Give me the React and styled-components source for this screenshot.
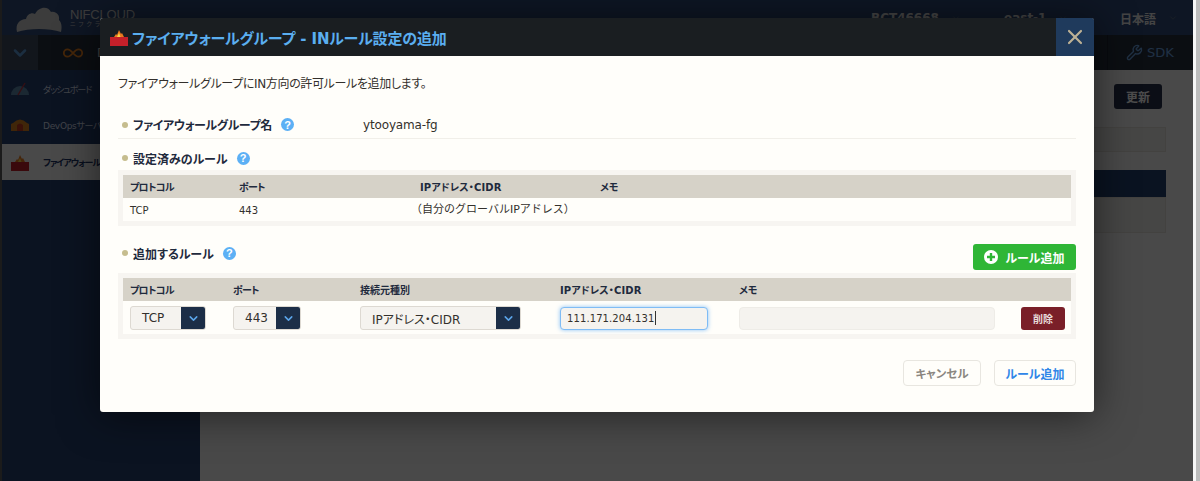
import React from 'react';
import styled, { createGlobalStyle } from 'styled-components';
import { ChevronDown, Infinity as InfinityIcon, Wrench, X } from 'lucide-react';

const GlobalStyle = createGlobalStyle`
  html, body {
    margin: 0;
    padding: 0;
    overflow: hidden;
    background: #4a4a4a;
  }
  * { box-sizing: border-box; }
`;

const FONT = `"DejaVu Sans", "Noto Sans CJK JP", sans-serif`;

const Page = styled.div`
  position: relative;
  width: 1200px;
  height: 481px;
  overflow: hidden;
  display: flex;
  font-family: ${FONT};
  font-feature-settings: "palt";
`;

const Screen = styled.div`
  width: 1193px;
  height: 100%;
  flex: none;
  display: flex;
  flex-direction: column;
  border-left: 2px solid #5a5a5a;
  background: #f6f6f4;
`;

const Gutter = styled.div`
  flex: 1;
  border-left: 3px solid #f6f6f6;
  background: #bcbcbc;
`;

const TopBar = styled.header`
  height: 35px;
  flex: none;
  display: flex;
  align-items: center;
  padding-left: 13px;
  background: #2f4a78;
  color: #fff;
`;

const Logo = styled.div`
  display: flex;
  align-items: center;
  gap: 7px;
`;

const LogoText = styled.div`
  display: flex;
  flex-direction: column;
  font-family: "Liberation Sans", "Noto Sans CJK JP", sans-serif;
  font-size: 13px;
  line-height: 13px;
  letter-spacing: -0.2px;
  color: #c8c8c8;

  small {
    font-size: 6px;
    line-height: 7px;
    letter-spacing: 3px;
  }
`;

const TopMenu = styled.div`
  margin-left: auto;
  display: flex;
  font-size: 12px;
  font-weight: 700;
  color: #e4e4e4;
`;

const TopMenuItem = styled.span`
  width: ${p => p.$w}px;
  display: flex;
  align-items: center;
  gap: 12px;
  padding-top: 1px;

  svg {
    color: #5a6a80;
  }
`;

const NavBar = styled.nav`
  height: 35px;
  flex: none;
  display: flex;
  align-items: center;
  background: #26303f;
`;

const NavToggle = styled.div`
  width: 36px;
  height: 100%;
  display: flex;
  align-items: center;
  justify-content: center;
  background: #3c4a60;
  color: #5c9ad8;
`;

const NavItem = styled.div`
  height: 100%;
  padding-left: 24px;
  display: flex;
  align-items: center;
  gap: 13px;
  font-size: 12px;
  color: #ddd;
`;

const SdkItem = styled(NavItem)`
  margin-left: auto;
  width: 86px;
  padding-left: 18px;
  gap: 4px;
  font-size: 13px;
  color: #6aa0e0;
  border-left: 1px solid #1b2230;
`;

const Main = styled.div`
  flex: 1;
  display: flex;
  min-height: 0;
`;

const Sidebar = styled.aside`
  width: 198px;
  flex: none;
  padding-top: 1px;
  background: #26406f;
`;

const SideItem = styled.div`
  height: 36px;
  margin-top: ${p => (p.$active ? 1 : 0)}px;
  display: flex;
  align-items: center;
  gap: 13px;
  padding-left: 8px;
  font-size: 9px;
  font-weight: ${p => (p.$active ? 700 : 400)};
  letter-spacing: ${p => p.$ls}px;
  white-space: nowrap;
  color: ${p => (p.$active ? '#1d3566' : '#d4dcec')};
  background: ${p => (p.$active ? '#f4f4f4' : 'transparent')};
`;

const Content = styled.main`
  flex: 1;
  display: flex;
  flex-direction: column;
  align-items: flex-end;
  padding: 14px 27px 0 0;
`;

const RefreshButton = styled.div`
  width: 48px;
  height: 25px;
  display: flex;
  align-items: center;
  justify-content: center;
  border-radius: 3px;
  background: #26304a;
  color: #fff;
  font-size: 12px;
  font-weight: 700;
  margin-right: 4px;
`;

const ContentRow = styled.div`
  width: 400px;
  height: ${p => p.$h}px;
  margin-top: ${p => p.$mt}px;
  background: ${p => p.$bg};
  border: 1px solid ${p => p.$bd};
`;

const Overlay = styled.div`
  position: absolute;
  top: 0;
  bottom: 0;
  left: 0;
  width: 1193px;
  background: rgba(0, 0, 0, 0.7);
`;

const Modal = styled.section`
  position: absolute;
  left: 100px;
  top: 18px;
  width: 994px;
  height: 394px;
  display: flex;
  flex-direction: column;
  background: #fffefa;
  border-radius: 3px;
  box-shadow: 0 3px 40px rgba(0, 0, 0, 0.55);
  overflow: hidden;
`;

const ModalHeader = styled.header`
  height: 38px;
  flex: none;
  display: flex;
  align-items: center;
  padding-left: 9px;
  gap: 3px;
  background: #1a1e21;
`;

const ModalTitle = styled.h1`
  margin: 0;
  font-size: 15px;
  font-weight: 700;
  letter-spacing: -0.15px;
  color: #5aaef0;
`;

const CloseButton = styled.div`
  width: 38px;
  height: 100%;
  margin-left: auto;
  display: flex;
  align-items: center;
  justify-content: center;
  background: #1f3a5c;
  color: #bdb195;
`;

const ModalBody = styled.div`
  flex: 1;
  display: flex;
  flex-direction: column;
  padding: 0 18px;
  color: #33302c;
`;

const Intro = styled.p`
  margin: 0;
  height: 59px;
  padding-top: 19px;
  font-size: 12px;
  line-height: 18px;
  letter-spacing: -0.35px;
`;

const NameRow = styled.div`
  height: 24px;
  flex: none;
  display: flex;
  align-items: center;
  border-bottom: 1px solid #f1efe9;
  padding-bottom: 4px;
`;

const Heading = styled.div`
  height: 18px;
  display: flex;
  align-items: center;
  gap: 5px;
  padding-left: 4px;
  font-size: 12px;
  font-weight: 700;
  letter-spacing: ${p => p.$ls || 0}px;
  color: #1f2a3d;

  &::before {
    content: '';
    width: 6px;
    height: 6px;
    border-radius: 50%;
    background: #c6bd8e;
  }
`;

const NameHeading = styled(Heading)`
  width: 245px;
`;

const Help = styled.span`
  width: 13px;
  height: 13px;
  margin-left: 4px;
  border-radius: 50%;
  display: flex;
  align-items: center;
  justify-content: center;
  background: #5cb0f5;
  color: #fff;
  font-size: 11px;
  font-weight: 700;
  font-family: "Liberation Sans", sans-serif;
`;

const NameValue = styled.span`
  font-size: 12px;
  letter-spacing: -0.15px;
`;

const SectionHead = styled.div`
  display: flex;
  align-items: flex-start;
  justify-content: space-between;
  height: ${p => p.$h}px;
  margin-top: ${p => p.$mt}px;
  flex: none;
`;

const RuleTable = styled.div`
  padding: 5px;
  background: #f7f5f1;
`;

const HeadRow = styled.div`
  height: 23px;
  padding-bottom: 1px;
  display: grid;
  grid-template-columns: ${p => p.$cols};
  align-items: center;
  background: #d6d2c8;
  font-size: 10px;
  font-weight: 700;
  color: #1f2a3d;
`;

const BodyRow = styled.div`
  height: ${p => p.$h}px;
  padding-top: 1px;
  display: grid;
  grid-template-columns: ${p => p.$cols};
  align-items: center;
  background: #fffefa;
  font-size: 10px;
  color: #33302c;
`;

const Cell = styled.span`
  padding-left: ${p => p.$pl || 0}px;
  letter-spacing: ${p => p.$ls || 0}px;
  white-space: nowrap;
`;

const WideCell = styled(Cell)`
  font-size: 11px;
  line-height: 12px;
  font-feature-settings: normal;
`;

const Select = styled.div`
  height: 24px;
  width: ${p => p.$w}px;
  display: flex;
  align-items: center;
  justify-content: space-between;
  padding-left: 11px;
  border: 1px solid #ddd9d2;
  border-radius: 3px;
  background: #f5f3ef;
  font-size: 12px;
  overflow: hidden;
`;

const SelectArrow = styled.span`
  width: 24px;
  height: 24px;
  flex: none;
  display: flex;
  align-items: center;
  justify-content: center;
  background: #1c2e47;
  color: #5aa4e8;
`;

const TextInput = styled.div`
  height: 23px;
  width: ${p => p.$w}px;
  display: flex;
  align-items: center;
  padding-left: 6px;
  border-radius: 4px;
  font-size: 10px;
  letter-spacing: 0.1px;
  background: #f5f3ef;
  border: 1px solid ${p => (p.$focus ? '#7fbcf5' : '#eeece7')};
  box-shadow: ${p => (p.$focus ? '0 0 4px rgba(90, 170, 245, 0.7)' : 'none')};
`;

const Caret = styled.span`
  width: 1px;
  height: 14px;
  margin-left: 1px;
  background: #333;
`;

const DeleteButton = styled.div`
  width: 44px;
  height: 23px;
  display: flex;
  align-items: center;
  justify-content: center;
  border-radius: 3px;
  background: #7a1f28;
  color: #e8dcdc;
  font-size: 10px;
  font-weight: 700;
`;

const AddButton = styled.div`
  width: 103px;
  height: 26px;
  display: flex;
  align-items: center;
  justify-content: center;
  gap: 7px;
  border-radius: 3px;
  background: #2fb636;
  color: #fff;
  font-size: 12px;
  font-weight: 700;
`;

const Footer = styled.div`
  display: flex;
  justify-content: flex-end;
  gap: 13px;
  margin-top: 21px;
`;

const FooterButton = styled.div`
  width: ${p => p.$w}px;
  height: 26px;
  display: flex;
  align-items: center;
  justify-content: center;
  border: 1px solid #e8e6e0;
  border-radius: 4px;
  background: #fffefa;
  font-size: ${p => p.$fs}px;
  font-weight: 700;
  color: ${p => p.$color};
`;

const FirewallIcon = ({ size = 20 }) => (
  <svg width={size} height={size} viewBox="0 0 20 18">
    <path d="M5 9 L7 6 L8 7 L10 2 L12 6 L13 5 L15 9 Z" fill="#e8791f" />
    <path d="M8 9 L9 7 L10 5 L11.5 9 Z" fill="#f7d54a" />
    <rect x="1" y="9" width="18" height="9" fill="#c4202a" />
  </svg>
);

const CloudLogo = () => (
  <svg width="48" height="32" viewBox="0 0 48 32">
    <path
      d="M2 30 C0 22 5 17 11 17 C12 12 17 10 20 12 C23 5 33 3 36 10 C41 9 45 13 44 18 C47 21 47 26 46 30 C34 26 14 26 2 30 Z"
      fill="#c8c8c8"
    />
  </svg>
);

const GaugeIcon = () => (
  <svg width="20" height="18" viewBox="0 0 20 18">
    <path d="M1 15 A9 9 0 1 1 19 15 Z" fill="#5a86a8" />
    <path d="M8 15 L15 3" stroke="#b03040" strokeWidth="1.4" />
  </svg>
);

const DevOpsIcon = () => (
  <svg width="20" height="18" viewBox="0 0 20 18">
    <path d="M3 7 Q10 0 17 7 L19 8 L19 15 L1 15 L1 8 Z" fill="#d8801e" />
    <path d="M7 15 V9 Q10 6 13 9 V15 Z" fill="#c23a20" />
  </svg>
);

const PlusCircle = () => (
  <svg width="14" height="14" viewBox="0 0 14 14">
    <circle cx="7" cy="7" r="7" fill="#fff" />
    <path d="M7 3 V11 M3 7 H11" stroke="#2fb636" strokeWidth="2.4" />
  </svg>
);

const Arrow = () => (
  <SelectArrow><ChevronDown size={13} strokeWidth={2.8} /></SelectArrow>
);

const savedHeadCols = '116px 181px 180px 1fr';
const savedBodyCols = '116px 172px 189px 1fr';
const addCols = '110px 127px 200px 179px 282px 1fr';

const Rules = () => (
  <>
    <SectionHead $h={21} $mt={10}>
      <Heading>
        設定済みのルール<Help>?</Help>
      </Heading>
    </SectionHead>
    <RuleTable>
      <HeadRow $cols={savedHeadCols}>
        <Cell $pl={7} $ls={-0.7}>プロトコル</Cell>
        <Cell $ls={-0.7}>ポート</Cell>
        <Cell $ls={0.15}>IPアドレス・CIDR</Cell>
        <Cell>メモ</Cell>
      </HeadRow>
      <BodyRow $h={23} $cols={savedBodyCols}>
        <Cell $pl={7}>TCP</Cell>
        <Cell>443</Cell>
        <WideCell>（自分のグローバルIPアドレス）</WideCell>
        <Cell />
      </BodyRow>
    </RuleTable>
    <SectionHead $h={29} $mt={18}>
      <Heading>
        追加するルール<Help>?</Help>
      </Heading>
      <AddButton>
        <PlusCircle />
        ルール追加
      </AddButton>
    </SectionHead>
    <RuleTable>
      <HeadRow $cols={addCols}>
        <Cell $pl={7} $ls={-0.7}>プロトコル</Cell>
        <Cell $ls={-0.7}>ポート</Cell>
        <Cell>接続元種別</Cell>
        <Cell $ls={0.15}>IPアドレス・CIDR</Cell>
        <Cell>メモ</Cell>
        <Cell />
      </HeadRow>
      <BodyRow $h={33} $cols={addCols}>
        <Cell $pl={7}>
          <Select $w={76}>TCP<Arrow /></Select>
        </Cell>
        <Cell>
          <Select $w={68}>443<Arrow /></Select>
        </Cell>
        <Cell>
          <Select $w={161}>IPアドレス・CIDR<Arrow /></Select>
        </Cell>
        <Cell>
          <TextInput $w={148} $focus>
            111.171.204.131<Caret />
          </TextInput>
        </Cell>
        <Cell>
          <TextInput $w={256} />
        </Cell>
        <Cell>
          <DeleteButton>削除</DeleteButton>
        </Cell>
      </BodyRow>
    </RuleTable>
  </>
);

const App = () => (
  <Page>
    <GlobalStyle />
    <Screen>
      <TopBar>
        <Logo>
          <CloudLogo />
          <LogoText>
            NIFCLOUD
            <small>ニフクラ</small>
          </LogoText>
        </Logo>
        <TopMenu>
          <TopMenuItem $w={133}>BCT46668<ChevronDown size={10} /></TopMenuItem>
          <TopMenuItem $w={116}>east-1<ChevronDown size={10} /></TopMenuItem>
          <TopMenuItem $w={73}>日本語<ChevronDown size={10} /></TopMenuItem>
        </TopMenu>
      </TopBar>
      <NavBar>
        <NavToggle><ChevronDown size={20} strokeWidth={3} /></NavToggle>
        <NavItem>
          <InfinityIcon size={22} color="#e8801e" />
          DevOps
        </NavItem>
        <SdkItem>
          <Wrench size={17} />
          SDK
        </SdkItem>
      </NavBar>
      <Main>
        <Sidebar>
          <SideItem $ls={-1.1}><GaugeIcon />ダッシュボード</SideItem>
          <SideItem $ls={-0.3}><DevOpsIcon />DevOpsサーバー</SideItem>
          <SideItem $active $ls={-1}><FirewallIcon />ファイアウォールグループ</SideItem>
        </Sidebar>
        <Content>
          <RefreshButton>更新</RefreshButton>
          <ContentRow $h={25} $mt={18} $bg="#ecebe6" $bd="#e0ded8" />
          <ContentRow $h={27} $mt={18} $bg="#24406f" $bd="#24406f" />
          <ContentRow $h={36} $mt={0} $bg="#ecebe6" $bd="#e0ded8" />
        </Content>
      </Main>
    </Screen>
    <Gutter />
    <Overlay />
    <Modal>
      <ModalHeader>
        <FirewallIcon />
        <ModalTitle>ファイアウォールグループ - INルール設定の追加</ModalTitle>
        <CloseButton><X size={24} strokeWidth={2.2} /></CloseButton>
      </ModalHeader>
      <ModalBody>
        <Intro>ファイアウォールグループにIN方向の許可ルールを追加します。</Intro>
        <NameRow>
          <NameHeading $ls={-0.4}>
            ファイアウォールグループ名<Help>?</Help>
          </NameHeading>
          <NameValue>ytooyama-fg</NameValue>
        </NameRow>
        <Rules />
        <Footer>
          <FooterButton $w={78} $fs={11.5} $color="#8a8680">キャンセル</FooterButton>
          <FooterButton $w={82} $fs={12} $color="#2f86e8">ルール追加</FooterButton>
        </Footer>
      </ModalBody>
    </Modal>
  </Page>
);

export default App;
